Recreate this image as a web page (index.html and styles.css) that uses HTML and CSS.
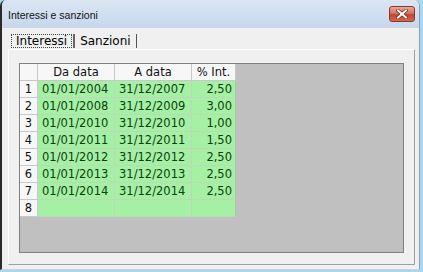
FILE: index.html
```html
<!DOCTYPE html>
<html>
<head>
<meta charset="utf-8">
<link rel="stylesheet" href="styles.css">
</head>
<body>
<div class="window">
  <div class="titlebar">
    <span class="title">Interessi e sanzioni</span>
    <div class="close">
      <svg width="12" height="10" viewBox="0 0 12 10">
        <path d="M2 1.5 L10 8.5 M10 1.5 L2 8.5" stroke="#6b2218" stroke-width="3.4" stroke-linecap="square"/>
        <path d="M2 1.5 L10 8.5 M10 1.5 L2 8.5" stroke="#ffffff" stroke-width="2" stroke-linecap="square"/>
      </svg>
    </div>
  </div>
  <div class="content">
    <div class="tabs">
      <span class="tab active">Interessi</span>
      <span class="sep thick"></span>
      <span class="tab">Sanzioni</span>
      <span class="sep"></span>
    </div>
    <div class="panel">
      <div class="gridarea">
        <div class="sheet">
          <div class="c hdr"></div>
          <div class="c hdr">Da data</div>
          <div class="c hdr">A data</div>
          <div class="c hdr">% Int.</div>

          <div class="c rh">1</div><div class="c d">01/01/2004</div><div class="c d">31/12/2007</div><div class="c d num">2,50</div>
          <div class="c rh">2</div><div class="c d">01/01/2008</div><div class="c d">31/12/2009</div><div class="c d num">3,00</div>
          <div class="c rh">3</div><div class="c d">01/01/2010</div><div class="c d">31/12/2010</div><div class="c d num">1,00</div>
          <div class="c rh">4</div><div class="c d">01/01/2011</div><div class="c d">31/12/2011</div><div class="c d num">1,50</div>
          <div class="c rh">5</div><div class="c d">01/01/2012</div><div class="c d">31/12/2012</div><div class="c d num">2,50</div>
          <div class="c rh">6</div><div class="c d">01/01/2013</div><div class="c d">31/12/2013</div><div class="c d num">2,50</div>
          <div class="c rh">7</div><div class="c d">01/01/2014</div><div class="c d">31/12/2014</div><div class="c d num">2,50</div>
          <div class="c rh">8</div><div class="c d"></div><div class="c d"></div><div class="c d num"></div>
        </div>
      </div>
    </div>
  </div>
</div>
</body>
</html>
```
FILE: styles.css
```css
html, body {
  margin: 0;
  padding: 0;
}
body {
  width: 423px;
  height: 272px;
  background: #a9d6f1;
  overflow: hidden;
}
.window {
  box-sizing: border-box;
  width: 420px;
  height: 270px;
  background: #f0f0f0;
  border-left: 2px solid #2a2a2a;
  border-right: 1px solid #8e9fb2;
  border-bottom: 1px solid #c9d6e2;
  border-radius: 6px 6px 0 0;
  display: flex;
  flex-direction: column;
  overflow: hidden;
}
.titlebar {
  height: 28px;
  flex: 0 0 28px;
  background: linear-gradient(#dbe6f3, #c6d7ec);
  display: flex;
  align-items: center;
  justify-content: space-between;
  padding: 0 4px 0 6px;
  box-sizing: border-box;
}
.title {
  font-family: "Liberation Sans", Arial, sans-serif;
  font-size: 10.5px;
  color: #111;
  margin-top: 2px;
}
.close {
  box-sizing: border-box;
  width: 26px;
  height: 16px;
  margin-top: -1px;
  border: 1px solid #8a3a2c;
  border-radius: 3px;
  background: linear-gradient(#e6a896 0%, #d4745f 45%, #c2452f 55%, #cf6a50 100%);
  display: flex;
  align-items: center;
  justify-content: center;
}
.content {
  flex: 1;
  display: flex;
  flex-direction: column;
  padding: 6px 4px 4px 0;
}
.tabs {
  display: flex;
  align-items: stretch;
  height: 14px;
  font-family: "DejaVu Sans", Verdana, sans-serif;
  font-size: 12px;
  color: #000;
}
.tab {
  line-height: 14px;
  padding: 0 5px;
}
.tab.active {
  margin-left: 9px;
  border: 1px dotted #444;
  line-height: 12px;
  padding: 0 4px;
}
.sep {
  width: 1px;
  background: #555;
}
.sep.thick {
  width: 2px;
  margin-left: 1px;
  background: #666;
}
.panel {
  flex: 1;
  margin: 1px 0 0 6px;
  border-top: 1px solid #ffffff;
  border-left: 1px solid #ffffff;
  border-right: 1px solid #a0a0a0;
  border-bottom: 1px solid #a0a0a0;
  padding: 13px 10px 11px 10px;
  display: flex;
  flex-direction: column;
}
.gridarea {
  flex: 1;
  background: #c0c0c0;
  border: 1px solid #808080;
}
.sheet {
  display: grid;
  grid-template-columns: 18px 77px 77px 44px;
  grid-auto-rows: 17px;
  width: max-content;
  font-family: "DejaVu Sans", Verdana, sans-serif;
  font-size: 11.5px;
}
.c {
  box-sizing: border-box;
  border-right: 1px solid #c8c8c8;
  border-bottom: 1px solid #c8c8c8;
  line-height: 16px;
  white-space: nowrap;
  overflow: hidden;
}
.hdr {
  background: #f7f7f7;
  color: #111;
  text-align: center;
}
.rh {
  background: #f7f7f7;
  color: #111;
  text-align: center;
}
.d {
  background: #a6f0a6;
  color: #0b3f0b;
  border-right-color: #b9d9b9;
  border-bottom-color: #b9d9b9;
  padding-left: 4px;
}
.d.num {
  text-align: right;
  padding-left: 0;
  padding-right: 3px;
  border-right-color: #a8c8a8;
}
```
